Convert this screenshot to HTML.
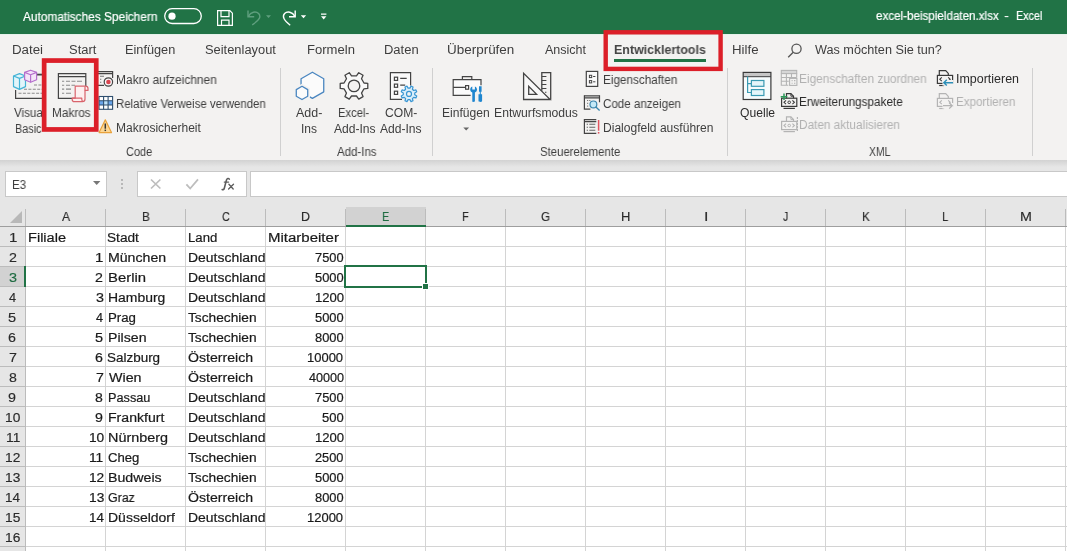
<!DOCTYPE html>
<html><head><meta charset="utf-8"><title>Excel</title>
<style>
html,body{margin:0;padding:0}
body{width:1067px;height:551px;overflow:hidden;position:relative;background:#fff;font-family:"Liberation Sans",sans-serif}
.t{position:absolute;white-space:pre;transform-origin:0 0;display:block;will-change:transform}
.r{position:absolute;display:block}
#w{position:absolute;left:0;top:0;width:1067px;height:551px;overflow:hidden}
</style></head><body><div id="w">
<div class="r" style="left:0px;top:0px;width:1067px;height:34px;background:#217346;"></div>
<div class="r" style="left:0px;top:34px;width:1067px;height:126px;background:#f3f2f1;"></div>
<div class="r" style="left:0px;top:160px;width:1067px;height:47px;background:#e6e6e6;"></div>
<div class="r" style="left:0px;top:160px;width:1067px;height:7px;background:linear-gradient(#d2d2d2,#e6e6e6);"></div>
<div class="r" style="left:0px;top:34px;width:1067px;height:1px;background:#e6f1eb;"></div>
<span class="t" style="left:22.88px;top:11.00px;font-size:12px;line-height:12px;color:#fff;transform:scaleX(0.9876);-webkit-text-stroke:0.2px #fff;">Automatisches Speichern</span>
<svg class="r" style="left:0;top:0" width="1067" height="207" viewBox="0 0 1067 207" fill="none" stroke-linecap="butt">
<rect x="164.7" y="8.7" width="36.6" height="14.8" rx="7.4" stroke="#fff" stroke-width="1.3"/>
<circle cx="172" cy="16.2" r="3.6" fill="#fff"/>
<g stroke="#fff" stroke-width="1.2"><path d="M217.6 10.600h12.200l2.600 2.600v12.200h-14.800z"/><path d="M221 10.600v6h8v-6M221.500 25.400v-5.200h7.500v5.200"/></g>
<g stroke="#5f9f7e" stroke-width="1.4"><path d="M248 10.5v6.2h6.2"/><path d="M248.3 16.4c2.5-4.6 7.6-5.6 10.3-2.8c2.6 2.8 1.4 6.3-6.4 11.2"/></g>
<path d="M266 15.2h5l-2.5 2.8z" fill="#5f9f7e"/>
<g stroke="#fff" stroke-width="1.4"><path d="M295.2 10.5v6.2h-6.2"/><path d="M294.9 16.4c-2.5-4.6-7.6-5.6-10.3-2.8c-2.6 2.8-1.0 6.6 5.6 11.6"/></g>
<path d="M300.8 15.2h5.4l-2.7 3z" fill="#fff"/>
<path d="M321 13.5h5.4v1.2h-5.4zM321 16.3h5.4l-2.7 3.2z" fill="#fff"/>
<g stroke="#555" stroke-width="1.3"><circle cx="796.5" cy="48.8" r="4.6"/><path d="M793.2 52.3l-5 5"/></g>
<g stroke="#444" stroke-width="1.2"><path d="M15.6 90v8.4h26.4"/><path d="M37 74.6h5" stroke-width="1.8"/></g>
<g stroke="#8a8a8a" stroke-width="1.1" stroke-dasharray="3 1.4"><path d="M34 85h8M24 89.2h18M18.5 93.3h24"/></g>
<g stroke="#45b4d6" stroke-width="1.2" fill="#e2f5fa" stroke-linejoin="round"><path d="M19.5 73.6l6 2.4v10.6l-6 2.8l-6-2.8v-10.6z"/><path d="M13.5 76l6 2.4l6-2.4M19.5 78.4v11" fill="none"/></g>
<g stroke="#b56fcc" stroke-width="1.2" fill="#f4e4f8" stroke-linejoin="round"><path d="M30.6 70.2l6 2.2v7.4l-6 2.5l-6-2.5v-7.4z"/><path d="M24.6 72.4l6 2.3l6-2.3M30.6 74.7v7.6" fill="none"/></g>
<g stroke="#444" stroke-width="1.2"><path d="M58.4 73.6h27.4M58.4 76.6h27.4" /><path d="M58.4 73v25.3h14M85.8 73v13"/></g>
<g stroke="#8a8a8a" stroke-width="1.1"><path d="M62 81.3h2.2M66 81.3h4M71.5 81.3h4M77 81.3h5M62 85.2h2.2M66 85.2h4M71.5 85.2h3.5M62 89.1h2.2M66 89.1h5M62 93.2h2.2M66 93.2h5"/></g>
<g stroke="#d9636c" stroke-width="1.2" fill="#fdf0f0" stroke-linejoin="round"><path d="M75.2 86.2h10.4c1.6 0 2.4 1 2.4 2.4v1.8h-3v8.6c0 1.6-1 2.6-2.6 2.6h-8c-1.4 0-2.2-1-2.2-2.2v-1.2h3z"/><path d="M85 86.4v4M72.4 98.2h9.4v1.4c0 1 .5 1.8 1.4 1.9" fill="none"/></g>
<g stroke="#444" stroke-width="1.2"><path d="M97 71.6h15.6M97 73.6h15.6" /><path d="M112.6 71v7M97 85.3h7"/></g>
<g stroke="#777" stroke-width="1.1"><path d="M100 76.2h4M100 79.2h1.3M100 82.2h1.3"/></g>
<circle cx="108.4" cy="82" r="4.2" stroke="#444" stroke-width="1.2" fill="#f8f8f8"/><circle cx="108.4" cy="82" r="2.3" fill="#d9454f"/>
<rect x="99" y="96.5" width="13.6" height="12.8" fill="#fff"/>
<rect x="99" y="100.8" width="4.6" height="4.2" fill="#6aa5ea"/><rect x="103.6" y="100.8" width="4.5" height="4.2" fill="#bfe3fb"/><rect x="108.1" y="100.8" width="4.5" height="4.2" fill="#6aa5ea"/>
<g stroke="#2f4f6f" stroke-width="1.1"><rect x="99" y="96.5" width="13.6" height="12.8"/><path d="M103.6 96.5v12.8M108.1 96.5v12.8M99 100.8h13.6M99 105h13.6"/></g>
<path d="M105.3 119.8l6.2 12.8h-12.4z" fill="#fcd694" stroke="#e9a23b" stroke-width="1.2" stroke-linejoin="round"/>
<path d="M105.3 123.5v5.2" stroke="#333" stroke-width="1.5"/><rect x="104.55" y="129.6" width="1.5" height="1.5" fill="#333"/>
<polygon points="312.40,72.20 323.74,78.75 323.74,91.85 312.40,98.40 301.06,91.85 301.06,78.75" stroke="#4a86c0" stroke-width="1.3" fill="#fbfbfb" stroke-linejoin="round"/>
<polygon points="302.00,84.60 309.19,88.75 309.19,97.05 302.00,101.20 294.81,97.05 294.81,88.75" stroke="#f3f2f1" stroke-width="1.6" fill="#f3f2f1"/>
<polygon points="302.00,86.30 307.72,89.60 307.72,96.20 302.00,99.50 296.28,96.20 296.28,89.60" stroke="#4a86c0" stroke-width="1.3" fill="#fbfbfb" stroke-linejoin="round"/>
<polygon points="363.99,83.00 367.78,83.42 367.78,88.38 363.99,88.80 361.51,93.10 363.04,96.59 358.74,99.07 356.48,96.00 351.52,96.00 349.26,99.07 344.96,96.59 346.49,93.10 344.01,88.80 340.22,88.38 340.22,83.42 344.01,83.00 346.49,78.70 344.96,75.21 349.26,72.73 351.52,75.80 356.48,75.80 358.74,72.73 363.04,75.21 361.51,78.70" stroke="#444" stroke-width="1.3" stroke-linejoin="round" fill="#f9f9f9"/>
<circle cx="354" cy="85.9" r="5.8" stroke="#444" stroke-width="1.3" fill="#f3f2f1"/>
<g stroke="#444" stroke-width="1.2"><path d="M402 99.3h-11.6v-26.7h20.2v13" fill="#fafafa"/><rect x="394.4" y="77.2" width="3.2" height="3.2"/><rect x="394.4" y="84.1" width="3.2" height="3.2"/><rect x="394.4" y="91.2" width="3.2" height="3.2"/><path d="M400.2 78.4h6.5M400.2 85.2h5"/></g>
<polygon points="414.73,94.81 416.73,95.95 415.92,97.92 413.69,97.31 412.41,98.59 413.02,100.82 411.05,101.63 409.91,99.63 408.09,99.63 406.95,101.63 404.98,100.82 405.59,98.59 404.31,97.31 402.08,97.92 401.27,95.95 403.27,94.81 403.27,92.99 401.27,91.85 402.08,89.88 404.31,90.49 405.59,89.21 404.98,86.98 406.95,86.17 408.09,88.17 409.91,88.17 411.05,86.17 413.02,86.98 412.41,89.21 413.69,90.49 415.92,89.88 416.73,91.85 414.73,92.99" stroke="#3996d3" stroke-width="1.2" stroke-linejoin="round" fill="#d9eefa"/>
<circle cx="409" cy="93.9" r="2.5" stroke="#3996d3" stroke-width="1.2" fill="#f3f2f1"/>
<g stroke="#444" stroke-width="1.2"><path d="M470.6 95.4h-17.4v-15.8h27.8v5.6" fill="#fafafa"/><path d="M462.4 79.6v-3h9.4v3M453.2 87.4h12.4"/><rect x="465.6" y="85.6" width="3" height="3.6" fill="#fff"/></g>
<path d="M472.3 86.4v3.2h2.6v-3.2c1.5.6 2.1 1.9 2.1 3.1c0 1.5-.9 2.6-2.1 3v8.6c0 .5-.5.9-1.3.9s-1.3-.4-1.3-.9v-8.6c-1.200-.4-2.100-1.500-2.100-3c0-1.200.6-2.500 2.100-3.100z" fill="#1f86cf"/>
<path d="M479 86.2h2.600v5.600h-2.600zM479.800 91.800h1v2.400h-1zM478.500 94.200h3.600v6.900c0 .5-.6.900-1.800.9s-1.800-.4-1.800-.9z" fill="#1f86cf"/>
<path d="M463.300 127.400h5.800l-2.900 3z" fill="#666"/>
<g stroke="#444" stroke-width="1.300" stroke-linejoin="miter" fill="#f8f8f8"><path d="M523.600 73.300v26.200h26.600z"/><path d="M528.700 86.400v7.900h7.900z"/><path d="M541.800 90.700v-18.100h8.900v27" fill="none"/><path d="M541.800 76.500h4.600M541.800 80.500h4.600M541.800 84.500h4.600M541.800 88.500h4.600M545 92.300h1.400" fill="none" stroke-width="1.1"/></g>
<g stroke="#444" stroke-width="1.200"><rect x="586.300" y="71.400" width="11.400" height="15" fill="#fafafa"/><rect x="589.400" y="75.300" width="2.300" height="2.300" stroke-width="1"/><rect x="589.400" y="80.600" width="2.300" height="2.300" stroke-width="1"/><path d="M593.100 76.500h2.300M593.100 81.800h2.300" stroke-width="1"/></g>
<g stroke="#444" stroke-width="1.200"><path d="M584.400 95.800h15.100M584.400 97.800h15.100"/><path d="M599.500 95.200v7M584.400 95.200v14h6"/></g>
<g stroke="#777" stroke-width="1"><path d="M587 100.500h1.200M589.200 100.500h1.200M587 103.300h1.200M587 106.100h1.200"/></g>
<g stroke="#3a86ad" stroke-width="1.200"><circle cx="593.400" cy="104.400" r="3.400" fill="#c4e9f7"/><path d="M595.900 106.900l3.700 3.600" stroke-width="1.400"/></g>
<g stroke="#444" stroke-width="1.200"><path d="M584.400 119.600h11.900M584.400 121.600h11.900"/><path d="M584.400 119v14.400h11.900"/></g>
<g stroke="#666" stroke-width="1.100"><path d="M586.700 124.300h1.300M589.300 124.300h6M586.700 127.300h1.300M589.300 127.300h6M586.700 130.300h1.300M589.300 130.300h6"/></g>
<path d="M598.600 120v10.700" stroke="#e2545f" stroke-width="1.500"/><rect x="597.850" y="132" width="1.500" height="1.600" fill="#e2545f"/>
<rect x="743.200" y="72.400" width="27.700" height="27.100" fill="#f6fbfc"/>
<rect x="743.200" y="72.400" width="27.700" height="4" fill="#c6c6c6"/>
<rect x="743.200" y="72.400" width="27.700" height="27.100" stroke="#3a3a3a" stroke-width="1.200"/><path d="M743.200 76.700h27.700" stroke="#3a3a3a" stroke-width="1"/>
<g stroke="#3a9ab2" stroke-width="1.200"><path d="M747.600 76.400v16.100h3.800M747.600 83.600h3.800"/><rect x="751.400" y="80.500" width="12.500" height="5.800" fill="#e4f5f9"/><rect x="751.400" y="89.600" width="12.500" height="5.900" fill="#e4f5f9"/></g>
<g stroke="#b4b4b4" stroke-width="1.100"><rect x="781.300" y="70.400" width="15.400" height="3.200" fill="#d6d6d6"/><path d="M781.300 73.600v11.600h7M781.300 77.500h15.400M781.300 81.300h7.500M786.400 73.600v11.600M791.500 73.600v4M796.700 73.600v4"/><rect x="789.600" y="78.400" width="7.300" height="7" fill="#f3f2f1"/><path d="M791.600 80.600h1M794 80.600h1.400M791.600 83.200h1M794 83.200h1.400"/></g>
<g stroke="#3a3a3a" stroke-width="1.200"><path d="M786.5 98.2v-4.600h4.400l2.600 2.600v2"/><path d="M790.9 93.6v2.600h2.600" stroke-width="1"/><rect x="781.6" y="98.2" width="15.200" height="8.200"/><path d="M783.5 108.39999999999999h11.400"/><path d="M786 100.39999999999999l-2 1.900l2 1.900M792.4 100.39999999999999l2 1.900l-2 1.900" stroke-width="1.100"/><circle cx="789.2" cy="102.3" r="1.300" stroke-width="1"/></g><path d="M784 93.400v6.600M780.700 96.700h6.600" stroke="#2e9b5b" stroke-width="1.500"/>
<g stroke="#b4b4b4" stroke-width="1.200"><path d="M786.5 121.4v-4.600h4.400l2.600 2.600v2"/><path d="M790.9 116.8v2.600h2.600" stroke-width="1"/><rect x="781.6" y="121.4" width="15.200" height="8.200"/><path d="M783.5 131.6h11.400"/><path d="M786 123.6l-2 1.900l2 1.900M792.4 123.6l2 1.900l-2 1.900" stroke-width="1.100"/><circle cx="789.2" cy="125.5" r="1.300" stroke-width="1"/></g><path d="M797.400 117v14" stroke="#b4b4b4" stroke-width="1.200" stroke-dasharray="2 1"/>
<g stroke="#3a3a3a" stroke-width="1.200"><path d="M939.3 75.2v-4.600h6.400l2.600 2.800v1.800"/><rect x="937.4" y="75.4" width="15.200" height="8"/><path d="M939.2 85.5h5"/><path d="M941.8 77.4l-2 1.900l2 1.900M948.2 77.4l2 1.900l-2 1.900" stroke-width="1.100"/></g><rect x="942.500" y="80" width="11" height="5.600" fill="#f3f2f1"/><path d="M953 82.700h-9M946.800 79.800l-3 2.900l3 2.900" stroke="#2e8fb8" stroke-width="1.400"/>
<g stroke="#b4b4b4" stroke-width="1.200"><path d="M939.3 98.2v-4.600h6.400l2.600 2.800v1.800"/><rect x="937.4" y="98.4" width="15.200" height="8"/><path d="M939.2 108.5h5"/><path d="M941.8 100.4l-2 1.900l2 1.900M948.2 100.4l2 1.900l-2 1.900" stroke-width="1.100"/></g><rect x="942.500" y="103" width="11" height="5.600" fill="#f3f2f1"/><path d="M943 105.700h9M949.200 102.800l3 2.900l-3 2.900" stroke="#b4b4b4" stroke-width="1.300"/>
</svg>
<span class="t" style="left:876.39px;top:10.00px;font-size:12px;line-height:12px;color:#fff;transform:scaleX(0.9688);-webkit-text-stroke:0.2px #fff;">excel-beispieldaten.xlsx</span>
<span class="t" style="left:1004.22px;top:10.00px;font-size:12px;line-height:12px;color:#fff;transform:scaleX(1.2550);">-</span>
<span class="t" style="left:1015.50px;top:10.00px;font-size:12px;line-height:12px;color:#fff;transform:scaleX(0.8973);-webkit-text-stroke:0.2px #fff;">Excel</span>
<span class="t" style="left:11.50px;top:44.00px;font-size:12.5px;line-height:12.5px;color:#3e3e3e;transform:scaleX(1.0644);">Datei</span>
<span class="t" style="left:68.50px;top:44.00px;font-size:12.5px;line-height:12.5px;color:#3e3e3e;transform:scaleX(1.0354);">Start</span>
<span class="t" style="left:124.80px;top:44.00px;font-size:12.5px;line-height:12.5px;color:#3e3e3e;transform:scaleX(1.0187);">Einfügen</span>
<span class="t" style="left:205.30px;top:44.00px;font-size:12.5px;line-height:12.5px;color:#3e3e3e;transform:scaleX(1.0309);">Seitenlayout</span>
<span class="t" style="left:306.60px;top:44.00px;font-size:12.5px;line-height:12.5px;color:#3e3e3e;transform:scaleX(1.0461);">Formeln</span>
<span class="t" style="left:383.50px;top:44.00px;font-size:12.5px;line-height:12.5px;color:#3e3e3e;transform:scaleX(1.0380);">Daten</span>
<span class="t" style="left:446.70px;top:44.00px;font-size:12.5px;line-height:12.5px;color:#3e3e3e;transform:scaleX(1.0764);">Überprüfen</span>
<span class="t" style="left:544.58px;top:44.00px;font-size:12.5px;line-height:12.5px;color:#3e3e3e;transform:scaleX(0.9910);">Ansicht</span>
<span class="t" style="left:731.50px;top:44.00px;font-size:12.5px;line-height:12.5px;color:#3e3e3e;transform:scaleX(1.0596);">Hilfe</span>
<span class="t" style="left:814.76px;top:44.00px;font-size:12.5px;line-height:12.5px;color:#3e3e3e;transform:scaleX(1.0128);">Was möchten Sie tun?</span>
<span class="t" style="left:613.50px;top:44.00px;font-size:12.5px;line-height:12.5px;color:#454545;transform:scaleX(0.9938);font-weight:700;">Entwicklertools</span>
<div class="r" style="left:614px;top:59px;width:92px;height:3px;background:#217346;"></div>
<span class="t" style="left:13.55px;top:107.00px;font-size:12px;line-height:12px;color:#3e3e3e;transform:scaleX(0.9664);">Visual</span>
<span class="t" style="left:15.00px;top:123.00px;font-size:12px;line-height:12px;color:#3e3e3e;transform:scaleX(0.9023);">Basic</span>
<span class="t" style="left:52.30px;top:107.00px;font-size:12px;line-height:12px;color:#3e3e3e;transform:scaleX(0.9814);">Makros</span>
<span class="t" style="left:116.10px;top:74.00px;font-size:12px;line-height:12px;color:#3e3e3e;transform:scaleX(0.9943);">Makro aufzeichnen</span>
<span class="t" style="left:116.10px;top:98.00px;font-size:12px;line-height:12px;color:#3e3e3e;transform:scaleX(0.9512);">Relative Verweise verwenden</span>
<span class="t" style="left:116.10px;top:122.00px;font-size:12px;line-height:12px;color:#3e3e3e;transform:scaleX(1.0021);">Makrosicherheit</span>
<span class="t" style="left:126.38px;top:146.00px;font-size:12px;line-height:12px;color:#3e3e3e;transform:scaleX(0.9138);">Code</span>
<span class="t" style="left:296.31px;top:107.00px;font-size:12px;line-height:12px;color:#3e3e3e;transform:scaleX(1.0384);">Add-</span>
<span class="t" style="left:301.40px;top:123.00px;font-size:12px;line-height:12px;color:#3e3e3e;transform:scaleX(0.9997);">Ins</span>
<span class="t" style="left:338.40px;top:107.00px;font-size:12px;line-height:12px;color:#3e3e3e;transform:scaleX(0.9358);">Excel-</span>
<span class="t" style="left:333.62px;top:123.00px;font-size:12px;line-height:12px;color:#3e3e3e;transform:scaleX(1.0067);">Add-Ins</span>
<span class="t" style="left:385.27px;top:107.00px;font-size:12px;line-height:12px;color:#3e3e3e;transform:scaleX(1.0074);">COM-</span>
<span class="t" style="left:380.32px;top:123.00px;font-size:12px;line-height:12px;color:#3e3e3e;transform:scaleX(1.0067);">Add-Ins</span>
<span class="t" style="left:336.61px;top:146.00px;font-size:12px;line-height:12px;color:#3e3e3e;transform:scaleX(0.9570);">Add-Ins</span>
<span class="t" style="left:442.20px;top:107.00px;font-size:12px;line-height:12px;color:#3e3e3e;transform:scaleX(1.0067);">Einfügen</span>
<span class="t" style="left:494.30px;top:107.00px;font-size:12px;line-height:12px;color:#3e3e3e;transform:scaleX(1.0152);">Entwurfsmodus</span>
<span class="t" style="left:602.80px;top:74.00px;font-size:12px;line-height:12px;color:#3e3e3e;transform:scaleX(0.9768);">Eigenschaften</span>
<span class="t" style="left:603.17px;top:98.00px;font-size:12px;line-height:12px;color:#3e3e3e;transform:scaleX(0.9655);">Code anzeigen</span>
<span class="t" style="left:602.80px;top:122.00px;font-size:12px;line-height:12px;color:#3e3e3e;transform:scaleX(1.0038);">Dialogfeld ausführen</span>
<span class="t" style="left:539.50px;top:146.00px;font-size:12px;line-height:12px;color:#3e3e3e;transform:scaleX(0.9481);">Steuerelemente</span>
<span class="t" style="left:739.83px;top:107.00px;font-size:12px;line-height:12px;color:#2b2b2b;transform:scaleX(1.0110);">Quelle</span>
<span class="t" style="left:799.20px;top:73.00px;font-size:12px;line-height:12px;color:#b1b1b1;transform:scaleX(0.9866);">Eigenschaften zuordnen</span>
<span class="t" style="left:799.20px;top:96.00px;font-size:12px;line-height:12px;color:#2b2b2b;transform:scaleX(0.9775);">Erweiterungspakete</span>
<span class="t" style="left:799.20px;top:119.00px;font-size:12px;line-height:12px;color:#b1b1b1;transform:scaleX(0.9825);">Daten aktualisieren</span>
<span class="t" style="left:955.60px;top:73.00px;font-size:12px;line-height:12px;color:#2b2b2b;transform:scaleX(1.0381);">Importieren</span>
<span class="t" style="left:955.60px;top:96.00px;font-size:12px;line-height:12px;color:#b1b1b1;transform:scaleX(0.9681);">Exportieren</span>
<span class="t" style="left:868.60px;top:146.00px;font-size:12px;line-height:12px;color:#3e3e3e;transform:scaleX(0.8650);">XML</span>
<div class="r" style="left:280px;top:68px;width:1px;height:88px;background:#d0d0d0;"></div>
<div class="r" style="left:432px;top:68px;width:1px;height:88px;background:#d0d0d0;"></div>
<div class="r" style="left:727px;top:68px;width:1px;height:88px;background:#d0d0d0;"></div>
<div class="r" style="left:1032px;top:68px;width:1px;height:88px;background:#d0d0d0;"></div>
<div class="r" style="left:5px;top:171px;width:102px;height:26px;background:#fff;border:1px solid #c8c8c8;box-sizing:border-box;"></div>
<span class="t" style="left:11.80px;top:179.00px;font-size:12px;line-height:12px;color:#3e3e3e;transform:scaleX(0.9630);">E3</span>
<svg class="r" style="left:92px;top:180px" width="10" height="6" viewBox="0 0 10 6"><path d="M1 1h7.4L4.7 5z" fill="#777"/></svg>
<div class="r" style="left:121px;top:179px;width:2px;height:2px;background:#b8b8b8;"></div>
<div class="r" style="left:121px;top:183px;width:2px;height:2px;background:#b8b8b8;"></div>
<div class="r" style="left:121px;top:187px;width:2px;height:2px;background:#b8b8b8;"></div>
<div class="r" style="left:137px;top:171px;width:110px;height:26px;background:#fff;border:1px solid #c8c8c8;box-sizing:border-box;"></div>
<div class="r" style="left:250px;top:171px;width:830px;height:26px;background:#fff;border:1px solid #c8c8c8;box-sizing:border-box;"></div>
<svg class="r" style="left:150px;top:178.300px" width="12" height="12" viewBox="0 0 12 12"><path d="M1 1.500l9.400 9M10.400 1.500l-9.400 9" stroke="#bdbdbd" stroke-width="1.700" fill="none"/></svg>
<svg class="r" style="left:185px;top:178.300px" width="15" height="13" viewBox="0 0 15 13"><path d="M1.400 6.300l3.800 4.200L13 1.400" stroke="#bdbdbd" stroke-width="1.800" fill="none"/></svg>
<svg class="r" style="left:218px;top:174px" width="20" height="20" viewBox="218 174 20 20" fill="none" stroke="#5c5c5c" stroke-linecap="round"><path d="M229.3 179.1c-.7-1-2.300-.9-2.800.8l-2.200 8.300c-.4 1.400-1.300 1.900-2.100 1.300" stroke-width="1.600"/><path d="M224.300 182.100h4.300" stroke-width="1.300"/><path d="M228.900 184.300l4.300 4.700M233.500 184.300l-4.900 4.700" stroke-width="1.300"/></svg>
<div class="r" style="left:0px;top:207px;width:1067px;height:20px;background:#e6e6e6;"></div>
<div class="r" style="left:25px;top:227px;width:1042px;height:324px;background:#fff;"></div>
<div class="r" style="left:0px;top:227px;width:25px;height:324px;background:#e6e6e6;"></div>
<div class="r" style="left:346px;top:207px;width:80px;height:20px;background:#d2d2d2;"></div>
<div class="r" style="left:0px;top:267px;width:25px;height:20px;background:#d2d2d2;"></div>
<div class="r" style="left:25px;top:227px;width:1px;height:324px;background:#d4d4d4;"></div>
<div class="r" style="left:25px;top:209px;width:1px;height:18px;background:#bcbcbc;"></div>
<div class="r" style="left:105px;top:227px;width:1px;height:324px;background:#d4d4d4;"></div>
<div class="r" style="left:105px;top:209px;width:1px;height:18px;background:#bcbcbc;"></div>
<div class="r" style="left:185px;top:227px;width:1px;height:324px;background:#d4d4d4;"></div>
<div class="r" style="left:185px;top:209px;width:1px;height:18px;background:#bcbcbc;"></div>
<div class="r" style="left:265px;top:227px;width:1px;height:324px;background:#d4d4d4;"></div>
<div class="r" style="left:265px;top:209px;width:1px;height:18px;background:#bcbcbc;"></div>
<div class="r" style="left:345px;top:227px;width:1px;height:324px;background:#d4d4d4;"></div>
<div class="r" style="left:345px;top:209px;width:1px;height:18px;background:#bcbcbc;"></div>
<div class="r" style="left:425px;top:227px;width:1px;height:324px;background:#d4d4d4;"></div>
<div class="r" style="left:425px;top:209px;width:1px;height:18px;background:#bcbcbc;"></div>
<div class="r" style="left:505px;top:227px;width:1px;height:324px;background:#d4d4d4;"></div>
<div class="r" style="left:505px;top:209px;width:1px;height:18px;background:#bcbcbc;"></div>
<div class="r" style="left:585px;top:227px;width:1px;height:324px;background:#d4d4d4;"></div>
<div class="r" style="left:585px;top:209px;width:1px;height:18px;background:#bcbcbc;"></div>
<div class="r" style="left:665px;top:227px;width:1px;height:324px;background:#d4d4d4;"></div>
<div class="r" style="left:665px;top:209px;width:1px;height:18px;background:#bcbcbc;"></div>
<div class="r" style="left:745px;top:227px;width:1px;height:324px;background:#d4d4d4;"></div>
<div class="r" style="left:745px;top:209px;width:1px;height:18px;background:#bcbcbc;"></div>
<div class="r" style="left:825px;top:227px;width:1px;height:324px;background:#d4d4d4;"></div>
<div class="r" style="left:825px;top:209px;width:1px;height:18px;background:#bcbcbc;"></div>
<div class="r" style="left:905px;top:227px;width:1px;height:324px;background:#d4d4d4;"></div>
<div class="r" style="left:905px;top:209px;width:1px;height:18px;background:#bcbcbc;"></div>
<div class="r" style="left:985px;top:227px;width:1px;height:324px;background:#d4d4d4;"></div>
<div class="r" style="left:985px;top:209px;width:1px;height:18px;background:#bcbcbc;"></div>
<div class="r" style="left:1065px;top:227px;width:1px;height:324px;background:#d4d4d4;"></div>
<div class="r" style="left:1065px;top:209px;width:1px;height:18px;background:#bcbcbc;"></div>
<div class="r" style="left:25px;top:226px;width:1042px;height:1px;background:#9e9e9e;"></div>
<div class="r" style="left:0px;top:226px;width:25px;height:1px;background:#9e9e9e;"></div>
<div class="r" style="left:25px;top:246px;width:1042px;height:1px;background:#d4d4d4;"></div>
<div class="r" style="left:0px;top:246px;width:25px;height:1px;background:#bcbcbc;"></div>
<div class="r" style="left:25px;top:266px;width:1042px;height:1px;background:#d4d4d4;"></div>
<div class="r" style="left:0px;top:266px;width:25px;height:1px;background:#bcbcbc;"></div>
<div class="r" style="left:25px;top:286px;width:1042px;height:1px;background:#d4d4d4;"></div>
<div class="r" style="left:0px;top:286px;width:25px;height:1px;background:#bcbcbc;"></div>
<div class="r" style="left:25px;top:306px;width:1042px;height:1px;background:#d4d4d4;"></div>
<div class="r" style="left:0px;top:306px;width:25px;height:1px;background:#bcbcbc;"></div>
<div class="r" style="left:25px;top:326px;width:1042px;height:1px;background:#d4d4d4;"></div>
<div class="r" style="left:0px;top:326px;width:25px;height:1px;background:#bcbcbc;"></div>
<div class="r" style="left:25px;top:346px;width:1042px;height:1px;background:#d4d4d4;"></div>
<div class="r" style="left:0px;top:346px;width:25px;height:1px;background:#bcbcbc;"></div>
<div class="r" style="left:25px;top:366px;width:1042px;height:1px;background:#d4d4d4;"></div>
<div class="r" style="left:0px;top:366px;width:25px;height:1px;background:#bcbcbc;"></div>
<div class="r" style="left:25px;top:386px;width:1042px;height:1px;background:#d4d4d4;"></div>
<div class="r" style="left:0px;top:386px;width:25px;height:1px;background:#bcbcbc;"></div>
<div class="r" style="left:25px;top:406px;width:1042px;height:1px;background:#d4d4d4;"></div>
<div class="r" style="left:0px;top:406px;width:25px;height:1px;background:#bcbcbc;"></div>
<div class="r" style="left:25px;top:426px;width:1042px;height:1px;background:#d4d4d4;"></div>
<div class="r" style="left:0px;top:426px;width:25px;height:1px;background:#bcbcbc;"></div>
<div class="r" style="left:25px;top:446px;width:1042px;height:1px;background:#d4d4d4;"></div>
<div class="r" style="left:0px;top:446px;width:25px;height:1px;background:#bcbcbc;"></div>
<div class="r" style="left:25px;top:466px;width:1042px;height:1px;background:#d4d4d4;"></div>
<div class="r" style="left:0px;top:466px;width:25px;height:1px;background:#bcbcbc;"></div>
<div class="r" style="left:25px;top:486px;width:1042px;height:1px;background:#d4d4d4;"></div>
<div class="r" style="left:0px;top:486px;width:25px;height:1px;background:#bcbcbc;"></div>
<div class="r" style="left:25px;top:506px;width:1042px;height:1px;background:#d4d4d4;"></div>
<div class="r" style="left:0px;top:506px;width:25px;height:1px;background:#bcbcbc;"></div>
<div class="r" style="left:25px;top:526px;width:1042px;height:1px;background:#d4d4d4;"></div>
<div class="r" style="left:0px;top:526px;width:25px;height:1px;background:#bcbcbc;"></div>
<div class="r" style="left:25px;top:546px;width:1042px;height:1px;background:#d4d4d4;"></div>
<div class="r" style="left:0px;top:546px;width:25px;height:1px;background:#bcbcbc;"></div>
<div class="r" style="left:25px;top:227px;width:1px;height:324px;background:#bcbcbc;"></div>
<svg class="r" style="left:9px;top:210px" width="14" height="14" viewBox="0 0 14 14"><path d="M13 1v12H1z" fill="#b8b8b8"/></svg>
<span class="t" style="left:61.63px;top:211.00px;font-size:12.5px;line-height:12.5px;color:#2a2a2a;transform:scaleX(0.9614);-webkit-text-stroke:0.15px;">A</span>
<span class="t" style="left:141.82px;top:211.00px;font-size:12.5px;line-height:12.5px;color:#2a2a2a;transform:scaleX(0.9404);-webkit-text-stroke:0.15px;">B</span>
<span class="t" style="left:222.09px;top:211.00px;font-size:12.5px;line-height:12.5px;color:#2a2a2a;transform:scaleX(0.8571);-webkit-text-stroke:0.15px;">C</span>
<span class="t" style="left:301.11px;top:211.00px;font-size:12.5px;line-height:12.5px;color:#2a2a2a;transform:scaleX(0.9802);-webkit-text-stroke:0.15px;">D</span>
<span class="t" style="left:382.30px;top:211.00px;font-size:12.5px;line-height:12.5px;color:#1e6b41;transform:scaleX(0.8648);-webkit-text-stroke:0.15px;">E</span>
<span class="t" style="left:462.00px;top:211.00px;font-size:12.5px;line-height:12.5px;color:#2a2a2a;transform:scaleX(0.8886);-webkit-text-stroke:0.15px;">F</span>
<span class="t" style="left:541.07px;top:211.00px;font-size:12.5px;line-height:12.5px;color:#2a2a2a;transform:scaleX(0.9303);-webkit-text-stroke:0.15px;">G</span>
<span class="t" style="left:620.77px;top:211.00px;font-size:12.5px;line-height:12.5px;color:#2a2a2a;transform:scaleX(1.0372);-webkit-text-stroke:0.15px;">H</span>
<span class="t" style="left:703.59px;top:211.00px;font-size:12.5px;line-height:12.5px;color:#2a2a2a;transform:scaleX(1.2806);-webkit-text-stroke:0.15px;">I</span>
<span class="t" style="left:783.38px;top:211.00px;font-size:12.5px;line-height:12.5px;color:#2a2a2a;transform:scaleX(0.8436);-webkit-text-stroke:0.15px;">J</span>
<span class="t" style="left:861.82px;top:211.00px;font-size:12.5px;line-height:12.5px;color:#2a2a2a;transform:scaleX(0.9302);-webkit-text-stroke:0.15px;">K</span>
<span class="t" style="left:942.43px;top:211.00px;font-size:12.5px;line-height:12.5px;color:#2a2a2a;transform:scaleX(0.8983);-webkit-text-stroke:0.15px;">L</span>
<span class="t" style="left:1020.00px;top:211.00px;font-size:12.5px;line-height:12.5px;color:#2a2a2a;transform:scaleX(1.1428);-webkit-text-stroke:0.15px;">M</span>
<div class="r" style="left:346px;top:225px;width:80px;height:2px;background:#217346;"></div>
<div class="r" style="left:24px;top:266px;width:2px;height:21px;background:#217346;"></div>
<span class="t" style="left:8.52px;top:232.00px;font-size:12.5px;line-height:12.5px;color:#2a2a2a;transform:scaleX(1.2086);-webkit-text-stroke:0.15px;">1</span>
<span class="t" style="left:8.54px;top:252.00px;font-size:12.5px;line-height:12.5px;color:#2a2a2a;transform:scaleX(1.1406);-webkit-text-stroke:0.15px;">2</span>
<span class="t" style="left:8.69px;top:272.00px;font-size:12.5px;line-height:12.5px;color:#1e6b41;transform:scaleX(1.1547);-webkit-text-stroke:0.15px;">3</span>
<span class="t" style="left:9.32px;top:292.00px;font-size:12.5px;line-height:12.5px;color:#2a2a2a;transform:scaleX(1.0248);-webkit-text-stroke:0.15px;">4</span>
<span class="t" style="left:8.49px;top:312.00px;font-size:12.5px;line-height:12.5px;color:#2a2a2a;transform:scaleX(1.1633);-webkit-text-stroke:0.15px;">5</span>
<span class="t" style="left:8.41px;top:332.00px;font-size:12.5px;line-height:12.5px;color:#2a2a2a;transform:scaleX(1.1432);-webkit-text-stroke:0.15px;">6</span>
<span class="t" style="left:8.62px;top:352.00px;font-size:12.5px;line-height:12.5px;color:#2a2a2a;transform:scaleX(1.1392);-webkit-text-stroke:0.15px;">7</span>
<span class="t" style="left:8.66px;top:372.00px;font-size:12.5px;line-height:12.5px;color:#2a2a2a;transform:scaleX(1.1313);-webkit-text-stroke:0.15px;">8</span>
<span class="t" style="left:8.46px;top:392.00px;font-size:12.5px;line-height:12.5px;color:#2a2a2a;transform:scaleX(1.1442);-webkit-text-stroke:0.15px;">9</span>
<span class="t" style="left:5.42px;top:412.00px;font-size:12.5px;line-height:12.5px;color:#2a2a2a;transform:scaleX(1.0971);-webkit-text-stroke:0.15px;">10</span>
<span class="t" style="left:6.27px;top:432.00px;font-size:12.5px;line-height:12.5px;color:#2a2a2a;transform:scaleX(1.1029);-webkit-text-stroke:0.15px;">11</span>
<span class="t" style="left:5.42px;top:452.00px;font-size:12.5px;line-height:12.5px;color:#2a2a2a;transform:scaleX(1.1011);-webkit-text-stroke:0.15px;">12</span>
<span class="t" style="left:5.42px;top:472.00px;font-size:12.5px;line-height:12.5px;color:#2a2a2a;transform:scaleX(1.0991);-webkit-text-stroke:0.15px;">13</span>
<span class="t" style="left:5.42px;top:492.00px;font-size:12.5px;line-height:12.5px;color:#2a2a2a;transform:scaleX(1.0817);-webkit-text-stroke:0.15px;">14</span>
<span class="t" style="left:5.42px;top:512.00px;font-size:12.5px;line-height:12.5px;color:#2a2a2a;transform:scaleX(1.0993);-webkit-text-stroke:0.15px;">15</span>
<span class="t" style="left:5.42px;top:532.00px;font-size:12.5px;line-height:12.5px;color:#2a2a2a;transform:scaleX(1.1013);-webkit-text-stroke:0.15px;">16</span>
<span class="t" style="left:27.80px;top:232.00px;font-size:12.5px;line-height:12.5px;color:#1a1a1a;transform:scaleX(1.1651);-webkit-text-stroke:0.2px #1a1a1a;">Filiale</span>
<span class="t" style="left:267.69px;top:232.00px;font-size:12.5px;line-height:12.5px;color:#1a1a1a;transform:scaleX(1.2003);-webkit-text-stroke:0.2px #1a1a1a;">Mitarbeiter</span>
<span class="t" style="left:107.34px;top:232.00px;font-size:12.5px;line-height:12.5px;color:#1a1a1a;transform:scaleX(1.0923);-webkit-text-stroke:0.2px #1a1a1a;">Stadt</span>
<span class="t" style="left:187.60px;top:232.00px;font-size:12.5px;line-height:12.5px;color:#1a1a1a;transform:scaleX(1.0529);-webkit-text-stroke:0.2px #1a1a1a;">Land</span>
<span class="t" style="left:95.33px;top:252.00px;font-size:12.5px;line-height:12.5px;color:#1a1a1a;transform:scaleX(1.2018);-webkit-text-stroke:0.2px #1a1a1a;">1</span>
<span class="t" style="left:315.38px;top:252.00px;font-size:12.5px;line-height:12.5px;color:#1a1a1a;transform:scaleX(1.0260);-webkit-text-stroke:0.2px #1a1a1a;">7500</span>
<span class="t" style="left:107.60px;top:252.00px;font-size:12.5px;line-height:12.5px;color:#1a1a1a;transform:scaleX(1.1301);-webkit-text-stroke:0.2px #1a1a1a;">München</span>
<span class="t" style="left:187.60px;top:252.00px;font-size:12.5px;line-height:12.5px;color:#1a1a1a;transform:scaleX(1.1170);-webkit-text-stroke:0.2px #1a1a1a;">Deutschland</span>
<span class="t" style="left:95.40px;top:272.00px;font-size:12.5px;line-height:12.5px;color:#1a1a1a;transform:scaleX(1.1331);-webkit-text-stroke:0.2px #1a1a1a;">2</span>
<span class="t" style="left:315.26px;top:272.00px;font-size:12.5px;line-height:12.5px;color:#1a1a1a;transform:scaleX(1.0297);-webkit-text-stroke:0.2px #1a1a1a;">5000</span>
<span class="t" style="left:107.60px;top:272.00px;font-size:12.5px;line-height:12.5px;color:#1a1a1a;transform:scaleX(1.1891);-webkit-text-stroke:0.2px #1a1a1a;">Berlin</span>
<span class="t" style="left:187.60px;top:272.00px;font-size:12.5px;line-height:12.5px;color:#1a1a1a;transform:scaleX(1.1170);-webkit-text-stroke:0.2px #1a1a1a;">Deutschland</span>
<span class="t" style="left:95.54px;top:292.00px;font-size:12.5px;line-height:12.5px;color:#1a1a1a;transform:scaleX(1.1464);-webkit-text-stroke:0.2px #1a1a1a;">3</span>
<span class="t" style="left:314.58px;top:292.00px;font-size:12.5px;line-height:12.5px;color:#1a1a1a;transform:scaleX(1.0475);-webkit-text-stroke:0.2px #1a1a1a;">1200</span>
<span class="t" style="left:107.60px;top:292.00px;font-size:12.5px;line-height:12.5px;color:#1a1a1a;transform:scaleX(1.1138);-webkit-text-stroke:0.2px #1a1a1a;">Hamburg</span>
<span class="t" style="left:187.60px;top:292.00px;font-size:12.5px;line-height:12.5px;color:#1a1a1a;transform:scaleX(1.1170);-webkit-text-stroke:0.2px #1a1a1a;">Deutschland</span>
<span class="t" style="left:96.16px;top:312.00px;font-size:12.5px;line-height:12.5px;color:#1a1a1a;transform:scaleX(1.0101);-webkit-text-stroke:0.2px #1a1a1a;">4</span>
<span class="t" style="left:315.26px;top:312.00px;font-size:12.5px;line-height:12.5px;color:#1a1a1a;transform:scaleX(1.0297);-webkit-text-stroke:0.2px #1a1a1a;">5000</span>
<span class="t" style="left:107.60px;top:312.00px;font-size:12.5px;line-height:12.5px;color:#1a1a1a;transform:scaleX(1.0594);-webkit-text-stroke:0.2px #1a1a1a;">Prag</span>
<span class="t" style="left:188.42px;top:312.00px;font-size:12.5px;line-height:12.5px;color:#1a1a1a;transform:scaleX(1.0973);-webkit-text-stroke:0.2px #1a1a1a;">Tschechien</span>
<span class="t" style="left:95.33px;top:332.00px;font-size:12.5px;line-height:12.5px;color:#1a1a1a;transform:scaleX(1.1576);-webkit-text-stroke:0.2px #1a1a1a;">5</span>
<span class="t" style="left:315.34px;top:332.00px;font-size:12.5px;line-height:12.5px;color:#1a1a1a;transform:scaleX(1.0274);-webkit-text-stroke:0.2px #1a1a1a;">8000</span>
<span class="t" style="left:107.60px;top:332.00px;font-size:12.5px;line-height:12.5px;color:#1a1a1a;transform:scaleX(1.1309);-webkit-text-stroke:0.2px #1a1a1a;">Pilsen</span>
<span class="t" style="left:188.42px;top:332.00px;font-size:12.5px;line-height:12.5px;color:#1a1a1a;transform:scaleX(1.0973);-webkit-text-stroke:0.2px #1a1a1a;">Tschechien</span>
<span class="t" style="left:95.26px;top:352.00px;font-size:12.5px;line-height:12.5px;color:#1a1a1a;transform:scaleX(1.1378);-webkit-text-stroke:0.2px #1a1a1a;">6</span>
<span class="t" style="left:307.28px;top:352.00px;font-size:12.5px;line-height:12.5px;color:#1a1a1a;transform:scaleX(1.0370);-webkit-text-stroke:0.2px #1a1a1a;">10000</span>
<span class="t" style="left:107.40px;top:352.00px;font-size:12.5px;line-height:12.5px;color:#1a1a1a;transform:scaleX(1.0761);-webkit-text-stroke:0.2px #1a1a1a;">Salzburg</span>
<span class="t" style="left:188.30px;top:352.00px;font-size:12.5px;line-height:12.5px;color:#1a1a1a;transform:scaleX(1.1286);-webkit-text-stroke:0.2px #1a1a1a;">Österreich</span>
<span class="t" style="left:95.51px;top:372.00px;font-size:12.5px;line-height:12.5px;color:#1a1a1a;transform:scaleX(1.1291);-webkit-text-stroke:0.2px #1a1a1a;">7</span>
<span class="t" style="left:308.61px;top:372.00px;font-size:12.5px;line-height:12.5px;color:#1a1a1a;transform:scaleX(1.0092);-webkit-text-stroke:0.2px #1a1a1a;">40000</span>
<span class="t" style="left:108.60px;top:372.00px;font-size:12.5px;line-height:12.5px;color:#1a1a1a;transform:scaleX(1.1415);-webkit-text-stroke:0.2px #1a1a1a;">Wien</span>
<span class="t" style="left:188.30px;top:372.00px;font-size:12.5px;line-height:12.5px;color:#1a1a1a;transform:scaleX(1.1286);-webkit-text-stroke:0.2px #1a1a1a;">Österreich</span>
<span class="t" style="left:95.49px;top:392.00px;font-size:12.5px;line-height:12.5px;color:#1a1a1a;transform:scaleX(1.1263);-webkit-text-stroke:0.2px #1a1a1a;">8</span>
<span class="t" style="left:315.38px;top:392.00px;font-size:12.5px;line-height:12.5px;color:#1a1a1a;transform:scaleX(1.0260);-webkit-text-stroke:0.2px #1a1a1a;">7500</span>
<span class="t" style="left:107.60px;top:392.00px;font-size:12.5px;line-height:12.5px;color:#1a1a1a;transform:scaleX(1.0170);-webkit-text-stroke:0.2px #1a1a1a;">Passau</span>
<span class="t" style="left:187.60px;top:392.00px;font-size:12.5px;line-height:12.5px;color:#1a1a1a;transform:scaleX(1.1170);-webkit-text-stroke:0.2px #1a1a1a;">Deutschland</span>
<span class="t" style="left:95.30px;top:412.00px;font-size:12.5px;line-height:12.5px;color:#1a1a1a;transform:scaleX(1.1367);-webkit-text-stroke:0.2px #1a1a1a;">9</span>
<span class="t" style="left:322.09px;top:412.00px;font-size:12.5px;line-height:12.5px;color:#1a1a1a;transform:scaleX(1.0415);-webkit-text-stroke:0.2px #1a1a1a;">500</span>
<span class="t" style="left:107.60px;top:412.00px;font-size:12.5px;line-height:12.5px;color:#1a1a1a;transform:scaleX(1.1278);-webkit-text-stroke:0.2px #1a1a1a;">Frankfurt</span>
<span class="t" style="left:187.60px;top:412.00px;font-size:12.5px;line-height:12.5px;color:#1a1a1a;transform:scaleX(1.1170);-webkit-text-stroke:0.2px #1a1a1a;">Deutschland</span>
<span class="t" style="left:88.53px;top:432.00px;font-size:12.5px;line-height:12.5px;color:#1a1a1a;transform:scaleX(1.0959);-webkit-text-stroke:0.2px #1a1a1a;">10</span>
<span class="t" style="left:314.58px;top:432.00px;font-size:12.5px;line-height:12.5px;color:#1a1a1a;transform:scaleX(1.0475);-webkit-text-stroke:0.2px #1a1a1a;">1200</span>
<span class="t" style="left:107.60px;top:432.00px;font-size:12.5px;line-height:12.5px;color:#1a1a1a;transform:scaleX(1.1513);-webkit-text-stroke:0.2px #1a1a1a;">Nürnberg</span>
<span class="t" style="left:187.60px;top:432.00px;font-size:12.5px;line-height:12.5px;color:#1a1a1a;transform:scaleX(1.1170);-webkit-text-stroke:0.2px #1a1a1a;">Deutschland</span>
<span class="t" style="left:89.23px;top:452.00px;font-size:12.5px;line-height:12.5px;color:#1a1a1a;transform:scaleX(1.0992);-webkit-text-stroke:0.2px #1a1a1a;">11</span>
<span class="t" style="left:315.25px;top:452.00px;font-size:12.5px;line-height:12.5px;color:#1a1a1a;transform:scaleX(1.0240);-webkit-text-stroke:0.2px #1a1a1a;">2500</span>
<span class="t" style="left:108.25px;top:452.00px;font-size:12.5px;line-height:12.5px;color:#1a1a1a;transform:scaleX(1.0512);-webkit-text-stroke:0.2px #1a1a1a;">Cheg</span>
<span class="t" style="left:188.42px;top:452.00px;font-size:12.5px;line-height:12.5px;color:#1a1a1a;transform:scaleX(1.0973);-webkit-text-stroke:0.2px #1a1a1a;">Tschechien</span>
<span class="t" style="left:88.53px;top:472.00px;font-size:12.5px;line-height:12.5px;color:#1a1a1a;transform:scaleX(1.0962);-webkit-text-stroke:0.2px #1a1a1a;">12</span>
<span class="t" style="left:315.26px;top:472.00px;font-size:12.5px;line-height:12.5px;color:#1a1a1a;transform:scaleX(1.0297);-webkit-text-stroke:0.2px #1a1a1a;">5000</span>
<span class="t" style="left:107.60px;top:472.00px;font-size:12.5px;line-height:12.5px;color:#1a1a1a;transform:scaleX(1.1360);-webkit-text-stroke:0.2px #1a1a1a;">Budweis</span>
<span class="t" style="left:188.42px;top:472.00px;font-size:12.5px;line-height:12.5px;color:#1a1a1a;transform:scaleX(1.0973);-webkit-text-stroke:0.2px #1a1a1a;">Tschechien</span>
<span class="t" style="left:88.53px;top:492.00px;font-size:12.5px;line-height:12.5px;color:#1a1a1a;transform:scaleX(1.0980);-webkit-text-stroke:0.2px #1a1a1a;">13</span>
<span class="t" style="left:315.34px;top:492.00px;font-size:12.5px;line-height:12.5px;color:#1a1a1a;transform:scaleX(1.0274);-webkit-text-stroke:0.2px #1a1a1a;">8000</span>
<span class="t" style="left:108.32px;top:492.00px;font-size:12.5px;line-height:12.5px;color:#1a1a1a;transform:scaleX(0.9901);-webkit-text-stroke:0.2px #1a1a1a;">Graz</span>
<span class="t" style="left:188.30px;top:492.00px;font-size:12.5px;line-height:12.5px;color:#1a1a1a;transform:scaleX(1.1286);-webkit-text-stroke:0.2px #1a1a1a;">Österreich</span>
<span class="t" style="left:88.53px;top:512.00px;font-size:12.5px;line-height:12.5px;color:#1a1a1a;transform:scaleX(1.0736);-webkit-text-stroke:0.2px #1a1a1a;">14</span>
<span class="t" style="left:307.28px;top:512.00px;font-size:12.5px;line-height:12.5px;color:#1a1a1a;transform:scaleX(1.0370);-webkit-text-stroke:0.2px #1a1a1a;">12000</span>
<span class="t" style="left:107.60px;top:512.00px;font-size:12.5px;line-height:12.5px;color:#1a1a1a;transform:scaleX(1.1195);-webkit-text-stroke:0.2px #1a1a1a;">Düsseldorf</span>
<span class="t" style="left:187.60px;top:512.00px;font-size:12.5px;line-height:12.5px;color:#1a1a1a;transform:scaleX(1.1170);-webkit-text-stroke:0.2px #1a1a1a;">Deutschland</span>
<div class="r" style="left:344px;top:265px;width:83px;height:23px;background:transparent;border:2px solid #217346;box-sizing:border-box;"></div>
<div class="r" style="left:422px;top:283px;width:7px;height:7px;background:#fff;"></div>
<div class="r" style="left:423px;top:284px;width:5px;height:5px;background:#217346;"></div>
<svg class="r" style="left:0;top:0" width="1067" height="140" viewBox="0 0 1067 140" fill="none" stroke="#dc1f29"><rect x="44.150" y="60.550" width="52.100" height="68.900" stroke-width="4.700"/><rect x="605.700" y="32.300" width="114.900" height="36.600" stroke-width="4.400"/></svg>
</div></body></html>
